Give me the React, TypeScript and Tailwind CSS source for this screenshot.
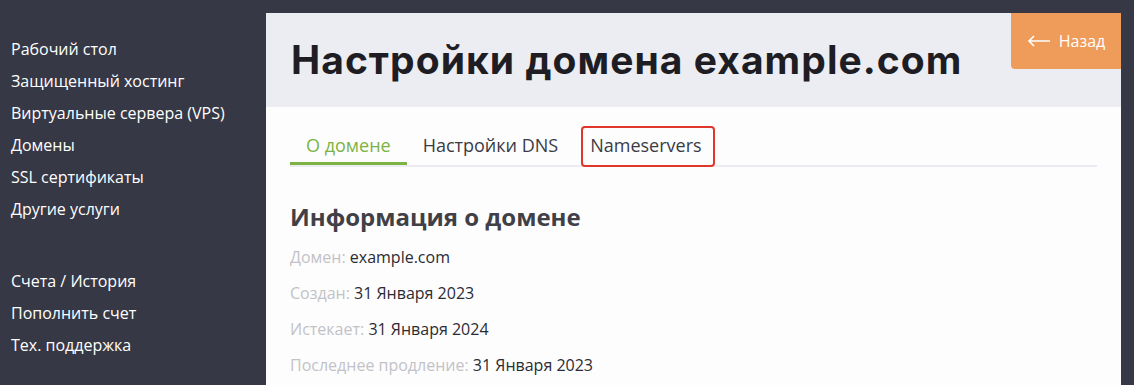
import React from "react";

const menuTop = [
  "Рабочий стол",
  "Защищенный хостинг",
  "Виртуальные сервера (VPS)",
  "Домены",
  "SSL сертификаты",
  "Другие услуги",
];

const menuBottom = ["Счета / История", "Пополнить счет", "Тех. поддержка"];

const info = [
  { label: "Домен:", value: "example.com" },
  { label: "Создан:", value: "31 Января 2023" },
  { label: "Истекает:", value: "31 Января 2024" },
  { label: "Последнее продление:", value: "31 Января 2023" },
];

export default function App() {
  return (
    <div
      className="flex w-[1134px] h-[385px] overflow-hidden bg-[#363845]"
      style={{ fontFamily: '"Open Sans", "Noto Sans", sans-serif' }}
    >
      {/* Sidebar */}
      <nav className="w-[266px] shrink-0 pl-[11px] pt-[36px] text-[16px] text-white">
        <ul className="flex flex-col">
          {menuTop.map((item) => (
            <li key={item} className="h-[32px] leading-[26px]">{item}</li>
          ))}
        </ul>
        <ul className="flex flex-col mt-[40px]">
          {menuBottom.map((item) => (
            <li key={item} className="h-[32px] leading-[26px]">{item}</li>
          ))}
        </ul>
      </nav>

      {/* Main panel */}
      <main className="mt-[13px] mr-[13px] flex-1 bg-[#fdfdfe] rounded-tl-[3px]">
        <header className="relative h-[94px] bg-[#ecedf2] flex items-center pl-[25px]">
          <h1
            className="text-[39px] font-bold text-[#1f1d24] tracking-[1.05px]"
            style={{ fontFamily: 'Inter, "Open Sans", sans-serif' }}
          >
            Настройки домена example.com
          </h1>
          <button className="absolute top-0 right-0 h-[56px] w-[110px] flex items-center justify-center gap-[8px] bg-[#ef9b5a] rounded-bl-[4px] text-white text-[16px]">
            <svg width="24" height="12" viewBox="0 0 24 12" fill="none" stroke="white" strokeWidth="1.6">
              <path d="M23 6H2M7 1L2 6l5 5" />
            </svg>
            Назад
          </button>
        </header>

        <div className="px-[24px]">
          {/* Tabs */}
          <div className="mt-[20px] flex border-b-2 border-[#ebecf1] text-[18px]">
            <div className="px-[16px] h-[38px] leading-[36px] text-[#7cb342] border-b-[3px] border-[#7cb342] -mb-[2px]">
              О домене
            </div>
            <div className="px-[16px] h-[38px] leading-[36px] text-[#3a3b45]">Настройки DNS</div>
            <div className="relative px-[16px] h-[38px] leading-[36px] text-[#3a3b45]">
              Nameservers
              <span className="absolute left-[7px] right-[3px] -top-[1px] -bottom-[2px] border-[2.5px] border-[#e0362c] rounded-[4px]" />
            </div>
          </div>

          {/* Info */}
          <h2 className="mt-[32px] text-[24px] font-bold text-[#414047]">Информация о домене</h2>
          <div className="mt-[7px] flex flex-col text-[16px]">
            {info.map((row) => (
              <p key={row.label} className="h-[36px] leading-[30px]">
                <span className="text-[#c2c2c6]">{row.label}</span>{" "}
                <span className="text-[#2b2b33]">{row.value}</span>
              </p>
            ))}
          </div>
        </div>
      </main>
    </div>
  );
}
